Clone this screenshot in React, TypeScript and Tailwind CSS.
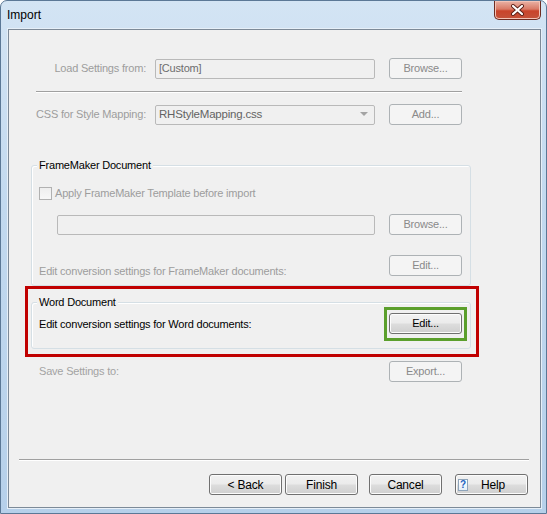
import React from 'react';

const disabledBtn =
  'h-[21px] w-[73px] shrink-0 rounded-[3px] border border-[#adb2b5] bg-[#f4f4f4] text-[#8a8a8a] flex items-center justify-center';
const activeBtn =
  'h-[21px] w-[73px] shrink-0 rounded-[3px] border border-[#707070] bg-[linear-gradient(to_bottom,#f2f2f2_0%,#ebebeb_48%,#dddddd_52%,#cfcfcf_100%)] shadow-[inset_0_0_0_1px_#fcfcfc] text-black flex items-center justify-center';

const GroupBox: React.FC<{ title: string; className?: string; children: React.ReactNode }> = ({
  title,
  className = '',
  children,
}) => (
  <div className={`relative ml-[22px] w-[440px] rounded-[3px] border border-[#d5dfe5] shadow-[inset_1px_1px_0_#fff] ${className}`}>
    <span className="absolute -top-[8px] left-[5px] bg-[#f0f0f0] px-[2px] leading-[14px] text-black">{title}</span>
    {children}
  </div>
);

const CloseButton: React.FC = () => (
  <div className="mr-[5px] flex h-[19px] w-[47px] items-center justify-center rounded-b-[5px] border border-t-0 border-[#6e2c22] bg-[linear-gradient(to_bottom,#eab3a6_0%,#d97a66_45%,#c9442b_55%,#c4523a_100%)] shadow-[inset_0_0_0_1px_#f3c3b6]">
    <svg width="15" height="12" viewBox="0 0 15 12">
      <path d="M3 2 L12 10 M12 2 L3 10" stroke="#5a2018" strokeWidth="4" strokeLinecap="round" />
      <path d="M3 2 L12 10 M12 2 L3 10" stroke="#ffffff" strokeWidth="2.2" strokeLinecap="round" />
    </svg>
  </div>
);

export default function App() {
  return (
    <div className="flex h-[514px] w-[547px] flex-col overflow-hidden rounded-t-[7px] border border-[#5b7896] bg-[linear-gradient(to_bottom,#d3e4f4_0%,#c2d9ef_40%,#b6d0ea_100%)] font-['Liberation_Sans',Arial,sans-serif] text-[11px] tracking-[-0.2px]">
      {/* Title bar */}
      <div className="flex h-[28px] shrink-0 items-start justify-between">
        <span className="pl-[6px] pt-[7px] text-[12px] leading-[15px] tracking-normal text-black">Import</span>
        <CloseButton />
      </div>

      {/* Client area */}
      <div className="mb-[5px] ml-[7px] mr-[5px] flex flex-1 flex-col border border-[#7d8a98] bg-[#f0f0f0] shadow-[0_0_0_1px_#e6eff8]">
        {/* Load settings */}
        <div className="mt-[28px] flex h-[21px] items-center">
          <div className="w-[137px] text-right text-[#9d9d9d]">Load Settings from:</div>
          <div className="ml-[9px] flex h-[20px] w-[220px] items-center rounded-[2px] border border-[#b9b9b9] pl-[3px] text-[#6d6d6d]">
            [Custom]
          </div>
          <div className={`ml-[14px] ${disabledBtn}`}>Browse...</div>
        </div>

        <div className="ml-[27px] mt-[12px] h-[2px] w-[426px] border-t border-[#a0a0a0] border-b border-b-white" />

        {/* CSS mapping */}
        <div className="mt-[11px] flex h-[21px] items-center">
          <div className="w-[137px] text-right text-[#9d9d9d]">CSS for Style Mapping:</div>
          <div className="ml-[9px] flex h-[20px] w-[220px] items-center justify-between rounded-[2px] border border-[#b9b9b9] pl-[3px] pr-[6px] text-[11.5px] text-[#636363]">
            <span>RHStyleMapping.css</span>
            <svg width="8" height="5" viewBox="0 0 8 5">
              <path d="M0 0 L8 0 L4 4 Z" fill="#a4a4a4" />
            </svg>
          </div>
          <div className={`ml-[14px] ${disabledBtn}`}>Add...</div>
        </div>

        {/* FrameMaker group */}
        <GroupBox title="FrameMaker Document" className="mt-[40px] h-[121px]">
          <div className="ml-[7px] mt-[21px] flex h-[13px] items-center">
            <div className="h-[13px] w-[13px] border border-[#b1b1b1] bg-[linear-gradient(to_bottom,#eeeeee,#f7f7f7)]" />
            <span className="ml-[3px] text-[#9d9d9d]">Apply FrameMaker Template before import</span>
          </div>
          <div className="mt-[14px] flex h-[21px] items-center">
            <div className="ml-[25px] h-[20px] w-[318px] rounded-[2px] border border-[#b9b9b9]" />
            <div className={`ml-[14px] ${disabledBtn}`}>Browse...</div>
          </div>
          <div className="mt-[20px] flex items-start">
            <div className="ml-[7px] mt-[9px] w-[350px] leading-[14px] text-[#9d9d9d]">
              Edit conversion settings for FrameMaker documents:
            </div>
            <div className={disabledBtn}>Edit...</div>
          </div>
        </GroupBox>

        {/* Word group */}
        <GroupBox title="Word Document" className="mt-[16px] h-[47px]">
          <div className="pointer-events-none absolute -bottom-[9px] -left-[7px] -right-[9px] -top-[17px] border-[3px] border-[#c00000]" />
          <div className="mt-[4px] flex items-center">
            <div className="ml-[7px] w-[345px] text-black">Edit conversion settings for Word documents:</div>
            <div className="border-[3px] border-[#5b9f2c] px-[2px] pb-[4px] pt-[3px]">
              <div className={activeBtn}>Edit...</div>
            </div>
          </div>
        </GroupBox>

        {/* Save settings */}
        <div className="mt-[12px] flex h-[21px] items-center">
          <div className="ml-[30px] w-[350px] text-[#a3a3a3]">Save Settings to:</div>
          <div className={disabledBtn}>Export...</div>
        </div>

        <div className="ml-[10px] mt-[77px] h-[2px] w-[510px] border-t border-[#a0a0a0] border-b border-b-white" />

        {/* Footer buttons */}
        <div className="mt-[13px] flex h-[21px] items-center text-[12px]">
          <div className={`ml-[200px] ${activeBtn}`}>&lt; Back</div>
          <div className={`ml-[3px] ${activeBtn} border-[#3c7fb1] shadow-[inset_0_0_0_1px_#a6e0f7]`}>Finish</div>
          <div className={`ml-[11px] ${activeBtn}`}>Cancel</div>
          <div className={`ml-[13px] ${activeBtn} justify-start`}>
            <span className="ml-[2px] flex h-[12px] w-[10px] items-center justify-center border border-[#8ea4ba] bg-[linear-gradient(to_bottom,#ffffff,#e4eef8)] text-[10px] font-bold leading-none text-[#1d63c0]">
              ?
            </span>
            <span className="ml-[13px]">Help</span>
          </div>
        </div>
      </div>
    </div>
  );
}
